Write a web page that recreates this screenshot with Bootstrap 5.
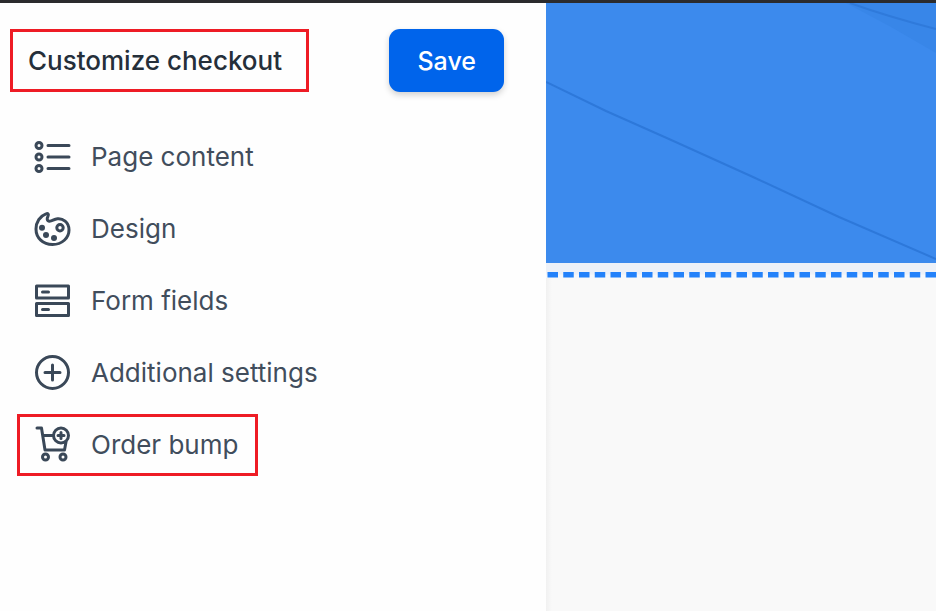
<!DOCTYPE html>
<html lang="en">
<head>
<meta charset="utf-8">
<meta name="viewport" content="width=device-width, initial-scale=1">
<title>Customize checkout</title>
<link href="https://cdn.jsdelivr.net/npm/bootstrap@5.3.0/dist/css/bootstrap.min.css" rel="stylesheet">
<style>
  body { font-family: Inter, "Liberation Sans", sans-serif; background: #fefefe; color: #414d5c; }
  .top-strip { height: 3px; background: #2b2b2d; }
  .editor-head { padding: 26px 42px 0 10px; }
  .title-box { height: 63px; padding: 0 24px 0 15px; border: 3px solid #ee1c25; }
  .title-box h1 { font-size: 26px; line-height: 32px; font-weight: 500; color: #252f3a; }
  .btn-save { height: 63px; padding: 0 28px; font-size: 25px; line-height: 32px; font-weight: 500; color: #fff; background: #0064eb; border: 0; border-radius: 11px; box-shadow: 0 3px 6px rgba(0,0,0,.18); }
  .btn-save:hover { background: #0058d0; color: #fff; }
  .editor-menu { padding: 34px 17px 0; gap: 10px; }
  .menu-link { height: 62px; padding: 0 17px 0 12px; gap: 19px; border: 3px solid transparent; font-size: 26px; line-height: 32px; color: #414d5c; }
  .menu-link.highlighted { border-color: #ee1c25; }
  .menu-link svg { width: 40px; height: 40px; fill: none; stroke: #3a4858; stroke-width: 3; stroke-linecap: round; stroke-linejoin: round; }
  .preview { background: linear-gradient(90deg, #f1f1f1, #f9f9f9 6px); }
  .hero-art { height: 260px; background: #3c8aed; }
  .drop-edge { height: 15px; background: #edf1f8; }
</style>
<script src="https://cdn.jsdelivr.net/npm/bootstrap@5.3.0/dist/js/bootstrap.bundle.min.js"></script>
</head>
<body class="min-vh-100 d-flex flex-column">
<div class="top-strip"></div>
<div class="row g-0 flex-grow-1">
  <aside class="col-7">
    <header class="editor-head d-flex justify-content-between align-items-center">
      <div class="title-box d-flex align-items-center"><h1 class="m-0 text-nowrap">Customize checkout</h1></div>
      <button type="button" class="btn btn-save">Save</button>
    </header>
    <nav class="editor-menu d-flex flex-column align-items-start" aria-label="Checkout settings">
      <a href="#content" class="menu-link d-flex align-items-center text-decoration-none text-nowrap">
        <svg viewBox="0 0 40 40" aria-hidden="true"><circle cx="7" cy="8.500" r="3"/><circle cx="7" cy="20" r="3"/><circle cx="7" cy="31.500" r="3"/><path d="M16 8.500h21M16 20h21M16 31.500h21"/></svg>
        <span>Page content</span>
      </a>
      <a href="#design" class="menu-link d-flex align-items-center text-decoration-none text-nowrap">
        <svg viewBox="0 0 40 40" aria-hidden="true"><path d="M14 4.800C8 7 4 13 4 20c0 9 7 15.500 16.500 15.500S37 29 37 21C37 13 30.500 9.200 25.500 9.800C21.500 10.300 20 12.500 17.200 12.200C14.500 11.800 15 9 16 7.200C17 5.200 16 4 14 4.800z"/><circle cx="28" cy="18.800" r="3.200"/><g fill="#3a4858" stroke="none"><circle cx="10" cy="18.800" r="3"/><circle cx="14" cy="26" r="3"/><circle cx="22" cy="29" r="3"/></g></svg>
        <span>Design</span>
      </a>
      <a href="#fields" class="menu-link d-flex align-items-center text-decoration-none text-nowrap">
        <svg viewBox="0 0 40 40" aria-hidden="true"><rect x="4.500" y="5" width="32" height="12"/><rect x="4.500" y="22.500" width="32" height="12"/><path d="M10.500 11h6M10.500 28.500h6"/></svg>
        <span>Form fields</span>
      </a>
      <a href="#additional" class="menu-link d-flex align-items-center text-decoration-none text-nowrap">
        <svg viewBox="0 0 40 40" aria-hidden="true"><circle cx="20.500" cy="19.500" r="16"/><path d="M20.500 12v15M13 19.500h15"/></svg>
        <span>Additional settings</span>
      </a>
      <a href="#bump" class="menu-link highlighted d-flex align-items-center text-decoration-none text-nowrap">
        <svg viewBox="0 0 40 40" aria-hidden="true"><path d="M5 3h4.500l3.500 22h19.500L34 17M11 10.500h10"/><circle cx="29" cy="10.500" r="7.500"/><path d="M29 7.500v6M26 10.500h6"/><circle cx="13.500" cy="32" r="3"/><circle cx="31" cy="32" r="3"/></svg>
        <span>Order bump</span>
      </a>
    </nav>
  </aside>
  <main class="col-5 preview" aria-label="Checkout preview">
    <svg class="hero-art d-block w-100" viewBox="0 0 390 260" preserveAspectRatio="none" aria-hidden="true">
      <path d="M300 0H390V50L345 24z" fill="#3886e8"/>
      <path d="M304 0Q340 13 390 26" fill="none" stroke="#2f7adb" stroke-width="2"/>
      <path d="M0 79L60 108L123 136L207 174L293 214L390 256" fill="none" stroke="#2d78da" stroke-width="2"/>
    </svg>
    <svg class="drop-edge d-block w-100" viewBox="0 0 1560 60" preserveAspectRatio="xMinYMin slice" aria-hidden="true">
      <rect y="46" width="1560" height="14" fill="#f6f8fb"/>
      <path d="M6 47H1560" stroke="#2482fa" stroke-width="22" stroke-dasharray="42 21"/>
    </svg>
  </main>
</div>
</body>
</html>
